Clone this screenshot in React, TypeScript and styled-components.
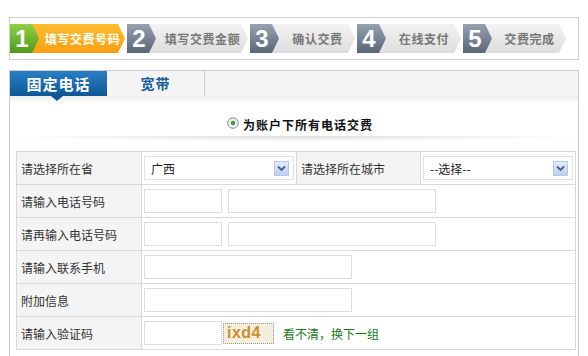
import styled, { createGlobalStyle } from 'styled-components';

const GlobalStyle = createGlobalStyle`
  body {
    margin: 0;
    background: #fff;
    font-family: "Noto Sans CJK SC", "Liberation Sans", sans-serif;
    font-size: 12px;
    color: #333;
  }
`;

const Page = styled.div`
  width: 570px;
  padding: 17px 0 0 9px;
`;

const StepBar = styled.div`
  display: flex;
  align-items: center;
  height: 43px;
  box-sizing: border-box;
  border: 1px solid #cfcfcf;
`;

const Step = styled.div<{ w: number }>`
  display: flex;
  flex: none;
  width: ${({ w }) => w}px;
  height: 29px;
  padding-right: 2px;
  box-sizing: border-box;
`;

const StepNum = styled.div<{ active?: boolean }>`
  position: relative;
  z-index: 1;
  flex: none;
  width: 29px;
  height: 29px;
  padding-right: 5px;
  box-sizing: border-box;
  clip-path: polygon(0 0, 22px 0, 29px 50%, 22px 100%, 0 100%);
  background: ${({ active }) =>
    active ? 'linear-gradient(#93cd45, #4d9a1d)' : 'linear-gradient(#96a1b1, #5a6678)'};
  color: #fff;
  font: bold 24px/29px "Liberation Sans", Arial, sans-serif;
  text-align: center;
`;

const StepLabel = styled.div<{ active?: boolean }>`
  flex: 1;
  margin-left: -7px;
  padding-left: 8px;
  clip-path: polygon(0 0, calc(100% - 7px) 0, 100% 50%, calc(100% - 7px) 100%, 0 100%);
  background: ${({ active }) =>
    active ? 'linear-gradient(#fdbd2e, #f7a012)' : 'linear-gradient(#f2f2f2, #dedede)'};
  color: ${({ active }) => (active ? '#fff' : '#777')};
  font-weight: bold;
  letter-spacing: 0.6px;
  line-height: 29px;
  text-align: center;
`;

const Panel = styled.div`
  margin-top: 10px;
  width: 570px;
  height: 300px;
  box-sizing: border-box;
  border: 1px solid #cccccc;
  border-bottom: none;
`;

const TabStrip = styled.div`
  display: flex;
  height: 25px;
  background: #f4f4f4;
`;

const Tab = styled.div<{ active?: boolean }>`
  position: relative;
  width: ${({ active }) => (active ? 97 : 98)}px;
  box-sizing: border-box;
  text-align: center;
  line-height: 25px;
  font-weight: bold;
  font-size: ${({ active }) => (active ? 15 : 14)}px;
  letter-spacing: 1px;
  color: ${({ active }) => (active ? '#fff' : '#1b5e9e')};
  background: ${({ active }) => (active ? 'linear-gradient(#2a7fc4, #0c5796)' : 'transparent')};
  border-right: ${({ active }) => (active ? 'none' : '1px solid #cccccc')};

  &::after {
    content: '';
    display: ${({ active }) => (active ? 'block' : 'none')};
    position: absolute;
    left: 41px;
    top: 100%;
    border-left: 6px solid transparent;
    border-right: 6px solid transparent;
    border-top: 5px solid #0c5796;
  }
`;

const Body = styled.div`
  background: linear-gradient(#eeeeee, #ffffff 9px);
  padding-left: 6px;
`;

const RadioRow = styled.div`
  display: flex;
  align-items: center;
  justify-content: center;
  height: 24px;
  padding-top: 16px;
  padding-left: 6px;
  font-weight: bold;
  color: #111;
  letter-spacing: 1px;
`;

const Radio = styled.svg`
  margin-right: 4px;
  margin-top: -3px;
`;

const Shadow = styled.div`
  height: 6px;
  margin: 0 0 9px 0;
  width: 560px;
  background: radial-gradient(ellipse 52% 100% at 50% 0, rgba(0, 0, 0, 0.13), rgba(0, 0, 0, 0));
`;

const Table = styled.table`
  width: 560px;
  border-collapse: collapse;
  table-layout: fixed;
`;

const LabelCell = styled.td<{ w?: number }>`
  width: ${({ w }) => w ?? 120}px;
  height: 32px;
  padding: 0 0 0 4px;
  border: 1px solid #d9d9d9;
  background: #f4f4f4;
  color: #333;
`;

const ValueCell = styled.td`
  height: 32px;
  padding: 0 0 0 2px;
  border: 1px solid #d9d9d9;
  background: #fff;
`;

const FieldRow = styled.div`
  display: flex;
  align-items: center;
  gap: 6px;
`;

const Input = styled.div<{ w: number }>`
  width: ${({ w }) => w}px;
  height: 24px;
  box-sizing: border-box;
  border: 1px solid #dedede;
  background: #fff;
`;

const FakeSelect = styled.div`
  display: flex;
  align-items: center;
  justify-content: space-between;
  width: 150px;
  height: 24px;
  box-sizing: border-box;
  border: 1px solid #e0e0e0;
  padding: 0 4px 0 6px;
  color: #222;
`;

const SelectArrow = styled.div`
  display: flex;
  align-items: center;
  justify-content: center;
  width: 15px;
  height: 15px;
  box-sizing: border-box;
  border: 1px solid #b7c9ea;
  background: linear-gradient(#e3ecfb, #bccff0);
`;

const Captcha = styled.div`
  display: flex;
  align-items: center;
  justify-content: flex-start;
  width: 51px;
  height: 21px;
  box-sizing: border-box;
  margin-left: -5px;
  padding-left: 3px;
  border: 1px dotted #9a9a9a;
  background: #f4eedd;
  color: #c98f2c;
  font: bold 16px "Liberation Sans", Arial, sans-serif;
  letter-spacing: 0.5px;
`;

const RefreshLink = styled.span`
  margin-left: 3px;
  color: #1a7a1a;
`;

const steps = [
  { n: 1, text: '填写交费号码', w: 117 },
  { n: 2, text: '填写交费金额', w: 123 },
  { n: 3, text: '确认交费', w: 107 },
  { n: 4, text: '在线支付', w: 106 },
  { n: 5, text: '交费完成', w: 105 },
];

const Select = ({ value }: { value: string }) => (
  <FakeSelect>
    <span>{value}</span>
    <SelectArrow>
      <svg width="9" height="7" viewBox="0 0 9 7">
        <path d="M1 1.5 L4.5 5 L8 1.5" fill="none" stroke="#4a5f86" strokeWidth="1.8" />
      </svg>
    </SelectArrow>
  </FakeSelect>
);

const App = () => (
  <>
    <GlobalStyle />
    <Page>
      <StepBar>
        {steps.map((s) => (
          <Step key={s.n} w={s.w}>
            <StepNum active={s.n === 1}>{s.n}</StepNum>
            <StepLabel active={s.n === 1}>{s.text}</StepLabel>
          </Step>
        ))}
      </StepBar>

      <Panel>
        <TabStrip>
          <Tab active>固定电话</Tab>
          <Tab>宽带</Tab>
        </TabStrip>
        <Body>
          <RadioRow>
            <Radio width="12" height="12" viewBox="0 0 12 12">
              <defs>
                <linearGradient id="rg" x1="0" y1="0" x2="0" y2="1">
                  <stop offset="0" stopColor="#e8e8e8" />
                  <stop offset="1" stopColor="#ffffff" />
                </linearGradient>
              </defs>
              <circle cx="6" cy="6" r="5.3" fill="url(#rg)" stroke="#7d8a99" strokeWidth="1" />
              <circle cx="6" cy="6" r="2.3" fill="#3d9b35" />
            </Radio>
            为账户下所有电话交费
          </RadioRow>
          <Shadow />
          <Table>
            <tbody>
              <tr>
                <LabelCell>请选择所在省</LabelCell>
                <ValueCell style={{ width: 152 }}>
                  <Select value="广西" />
                </ValueCell>
                <LabelCell w={119}>请选择所在城市</LabelCell>
                <ValueCell>
                  <Select value="--选择--" />
                </ValueCell>
              </tr>
              <tr>
                <LabelCell>请输入电话号码</LabelCell>
                <ValueCell colSpan={3}>
                  <FieldRow>
                    <Input w={78} />
                    <Input w={208} />
                  </FieldRow>
                </ValueCell>
              </tr>
              <tr>
                <LabelCell>请再输入电话号码</LabelCell>
                <ValueCell colSpan={3}>
                  <FieldRow>
                    <Input w={78} />
                    <Input w={208} />
                  </FieldRow>
                </ValueCell>
              </tr>
              <tr>
                <LabelCell>请输入联系手机</LabelCell>
                <ValueCell colSpan={3}>
                  <Input w={208} />
                </ValueCell>
              </tr>
              <tr>
                <LabelCell>附加信息</LabelCell>
                <ValueCell colSpan={3}>
                  <Input w={208} />
                </ValueCell>
              </tr>
              <tr>
                <LabelCell>请输入验证码</LabelCell>
                <ValueCell colSpan={3}>
                  <FieldRow>
                    <Input w={78} />
                    <Captcha>ixd4</Captcha>
                    <RefreshLink>看不清，换下一组</RefreshLink>
                  </FieldRow>
                </ValueCell>
              </tr>
            </tbody>
          </Table>
        </Body>
      </Panel>
    </Page>
  </>
);

export default App;
